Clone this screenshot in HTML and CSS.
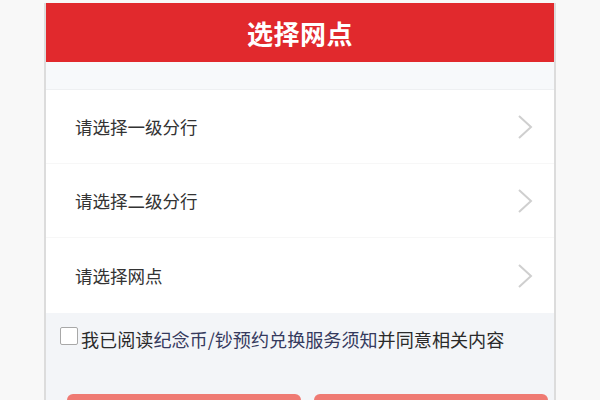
FILE: index.html
```html
<!DOCTYPE html>
<html lang="zh-CN">
<head>
<meta charset="utf-8">
<link rel="stylesheet" href="styles.css">
</head>
<body>
<div class="card">
  <header class="header">选择网点</header>
  <div class="band"></div>
  <ul class="list">
    <li class="row"><span>请选择一级分行</span><svg class="chev" viewBox="0 0 18 26" width="18" height="26"><path d="M3 2 L15 13 L3 24" fill="none" stroke="#cfcfcf" stroke-width="2"/></svg></li>
    <li class="row"><span>请选择二级分行</span><svg class="chev" viewBox="0 0 18 26" width="18" height="26"><path d="M3 2 L15 13 L3 24" fill="none" stroke="#cfcfcf" stroke-width="2"/></svg></li>
    <li class="row"><span>请选择网点</span><svg class="chev" viewBox="0 0 18 26" width="18" height="26"><path d="M3 2 L15 13 L3 24" fill="none" stroke="#cfcfcf" stroke-width="2"/></svg></li>
  </ul>
  <div class="agree">
    <span class="box"></span><span class="agree-text">我已阅读<span class="link">纪念币/钞预约兑换服务须知</span>并同意相关内容</span>
  </div>
  <div class="buttons">
    <div class="btn"></div>
    <div class="btn"></div>
  </div>
</div>
</body>
</html>
```

FILE: styles.css
```css
* { box-sizing: border-box; }
html, body { margin: 0; padding: 0; }
html { overflow: hidden; height: 400px; }
body {
  background: #f8f8f8;
  font-family: "Noto Sans CJK SC", "Noto Sans", sans-serif;
  width: 600px;
  height: 400px;
  overflow: hidden;
  padding-top: 3px;
}
.card {
  margin-left: 44px;
  width: 512px;
  height: 397px;
  overflow: hidden;
  border-left: 2px solid #dcdcdc;
  border-right: 2px solid #dcdcdc;
  background: #f3f5f8;
  display: flex;
  flex-direction: column;
}
.header {
  flex: none;
  height: 59px;
  background: #e1292d;
  color: #fff;
  font-size: 26px;
  font-weight: 700;
  display: flex;
  align-items: center;
  justify-content: center;
  letter-spacing: 0.5px;
}
.band {
  flex: none;
  height: 28px;
  background: #f7f9fb;
  border-bottom: 1px solid #eef0f2;
}
.list {
  flex: none;
  list-style: none;
  margin: 0;
  padding: 0;
  background: #fff;
}
.row {
  height: 74px;
  display: flex;
  align-items: center;
  justify-content: space-between;
  padding: 0 20px 0 29px;
  font-size: 17.5px;
  color: #333;
  border-bottom: 1px solid #f7f7f7;
}
.row:last-child { border-bottom: none; height: 75px; }
.chev { display: block; }
.agree {
  flex: none;
  display: flex;
  align-items: center;
  padding: 8px 0 0 14px;
  height: 44px;
}
.box {
  width: 18px;
  height: 18px;
  border: 1.5px solid #a8a8a8;
  border-radius: 2px;
  background: #fff;
  margin-right: 3px;
  margin-top: -6px;
}
.agree-text {
  font-size: 18.1px;
  color: #2a2a2a;
}
.link { color: #353a5e; }
.buttons {
  flex: none;
  display: flex;
  gap: 13px;
  padding: 37px 6px 0 21px;
}
.btn {
  flex: 1;
  height: 40px;
  background: #ef7a73;
  border-radius: 6px;
}
```
